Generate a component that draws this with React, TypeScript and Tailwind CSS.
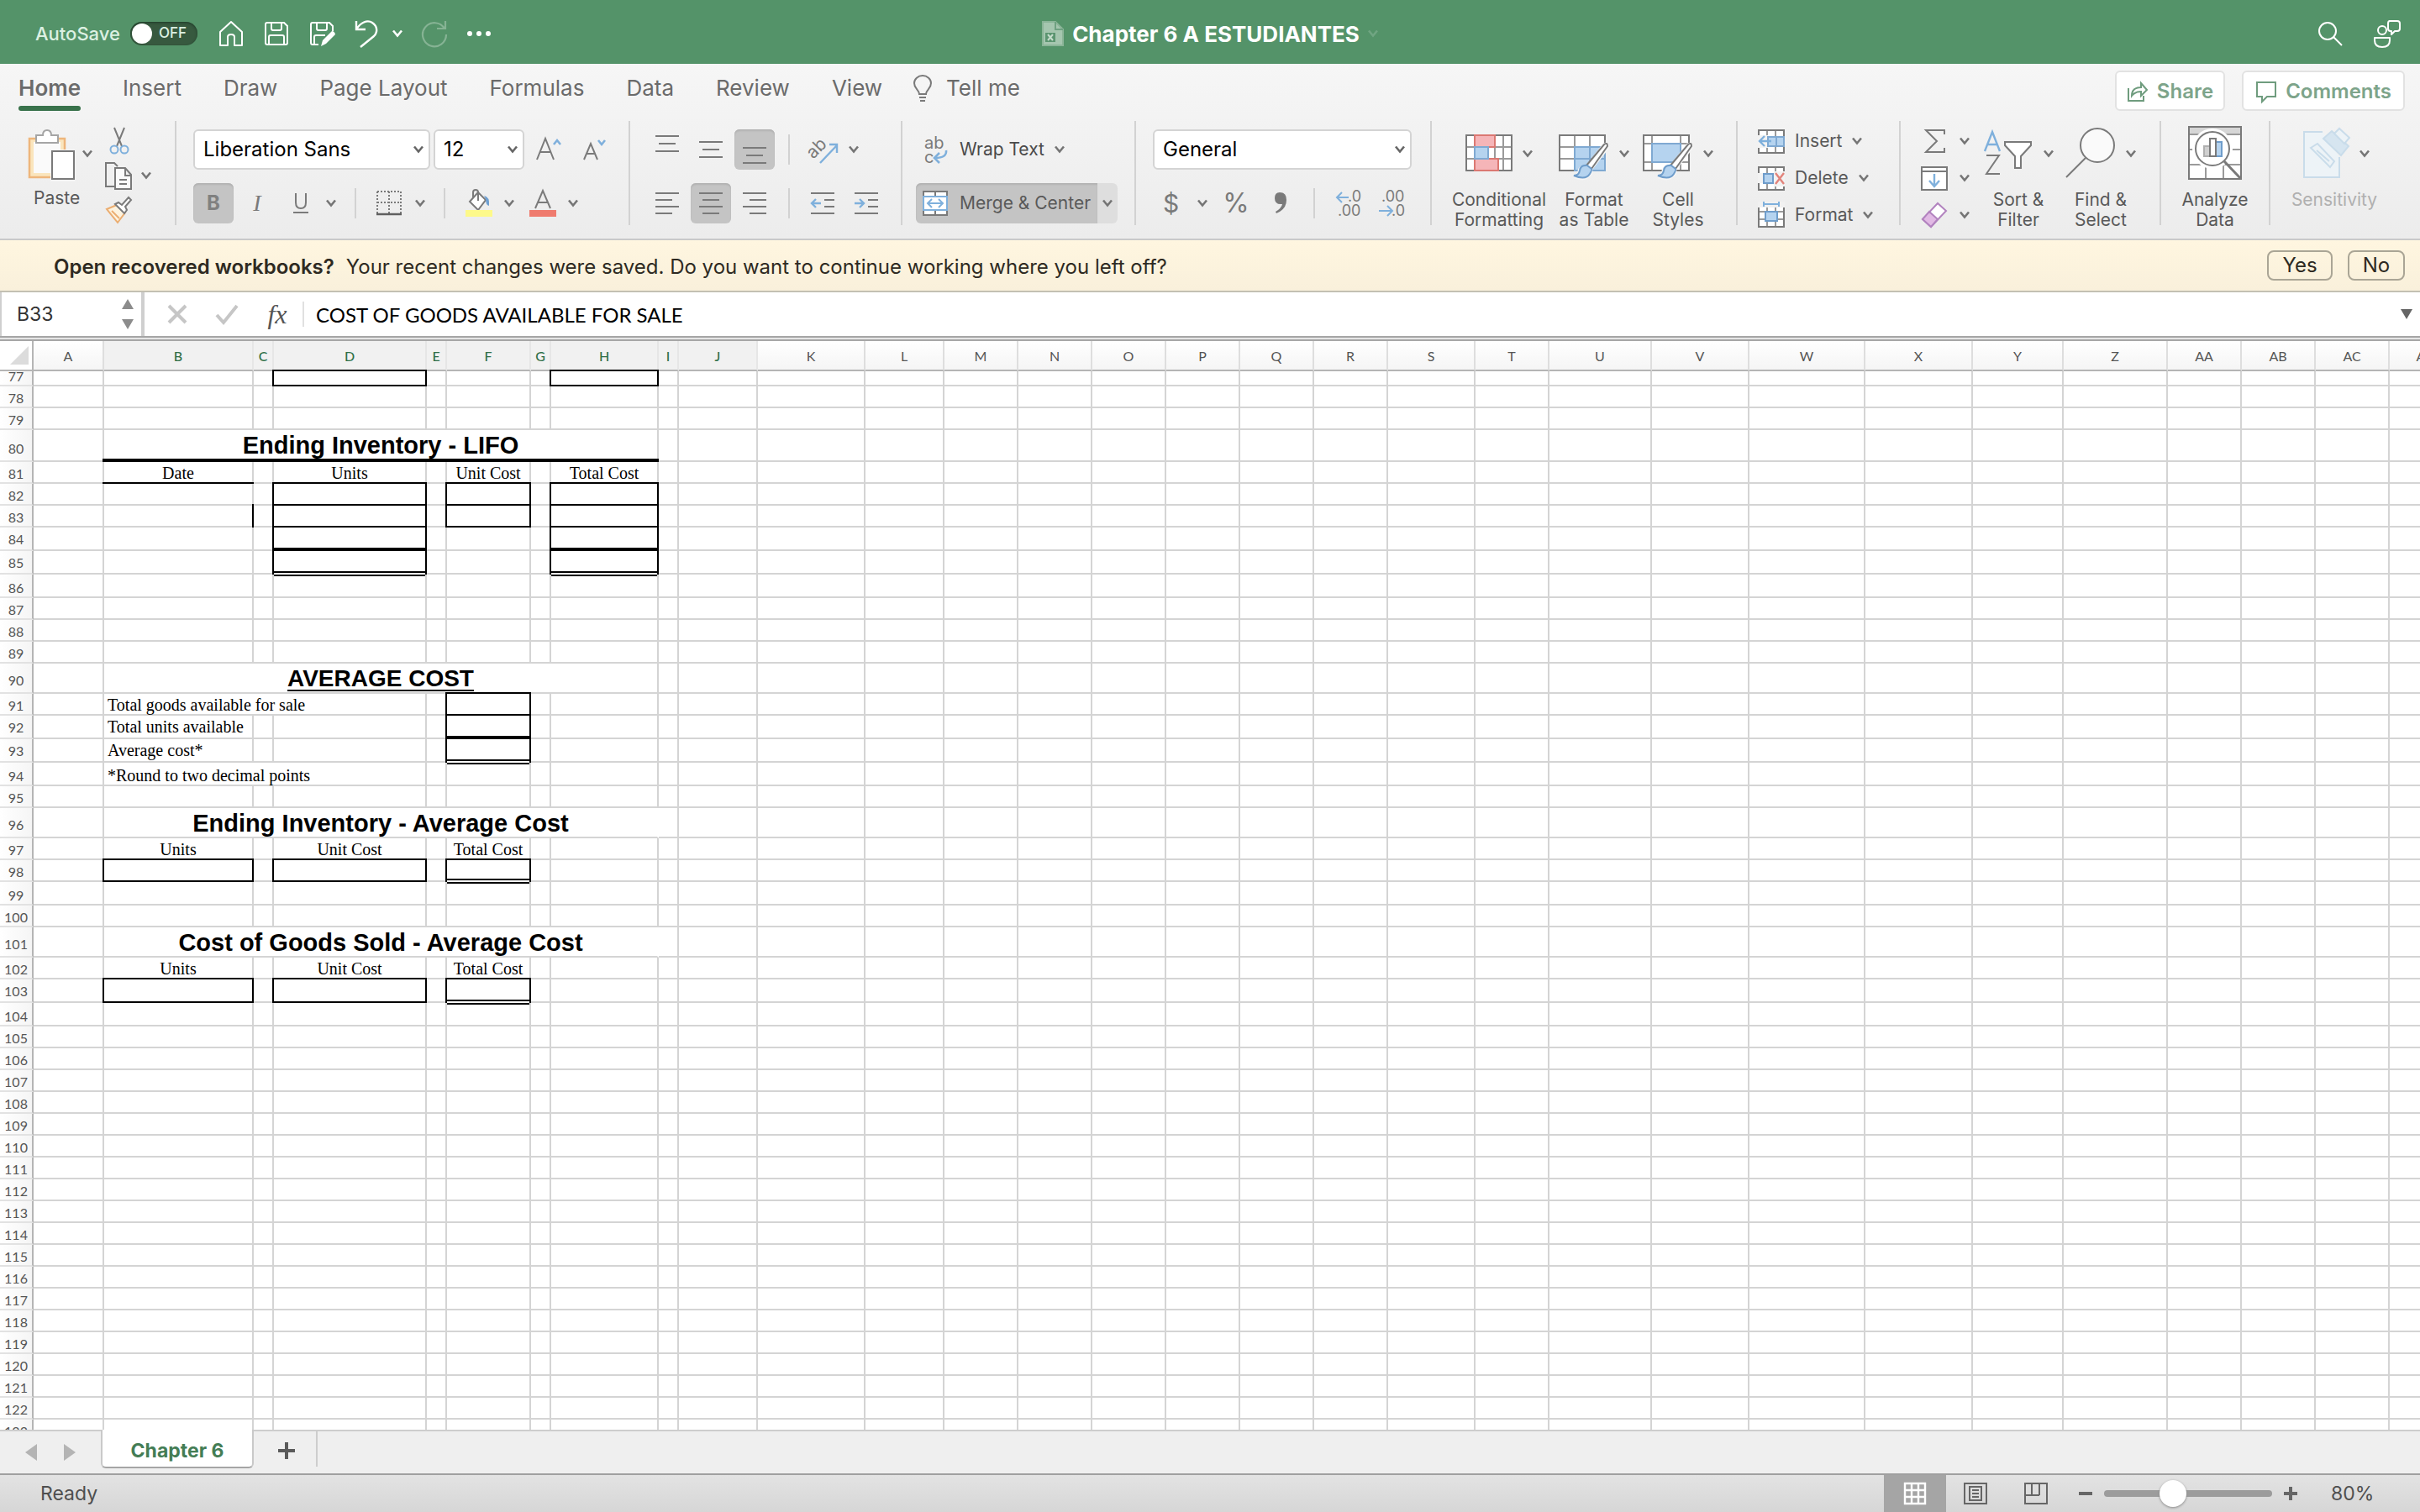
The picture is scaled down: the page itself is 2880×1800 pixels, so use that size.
import type { ReactNode } from 'react';
import clsx from 'clsx';

type Kind = 'box' | 'thick' | 'double' | 'line' | 'heavy' | 'right';
type Cell = { text?: string; span?: number; kind?: Kind; title?: boolean; center?: boolean; underline?: boolean; open?: boolean; raised?: boolean };
type Row = { h?: string; cells?: Record<string, Cell> };

const columns: [string, string][] = [
    ['A', 'w-[84px]'], ['B', 'w-[178px]'], ['C', 'w-[24px]'], ['D', 'w-[182px]'], ['E', 'w-[24px]'],
    ['F', 'w-[100px]'], ['G', 'w-[24px]'], ['H', 'w-[128px]'], ['I', 'w-[24px]'], ['J', 'w-[94px]'],
    ['K', 'w-[128px]'], ['L', 'w-[94px]'], ['M', 'w-[88px]'], ['N', 'w-[88px]'], ['O', 'w-[88px]'],
    ['P', 'w-[88px]'], ['Q', 'w-[88px]'], ['R', 'w-[88px]'], ['S', 'w-[104px]'], ['T', 'w-[88px]'],
    ['U', 'w-[122px]'], ['V', 'w-[116px]'], ['W', 'w-[138px]'], ['X', 'w-[128px]'], ['Y', 'w-[108px]'],
    ['Z', 'w-[124px]'], ['AA', 'w-[88px]'], ['AB', 'w-[88px]'], ['AC', 'w-[88px]'], ['AD', 'w-[88px]'],
];

const label = (text: string): Cell => ({ text, center: true });
const box: Cell = { kind: 'box' };
const thick: Cell = { kind: 'thick' };
const double: Cell = { kind: 'double' };

const rows: Record<number, Row> = {
    77: { h: 'h-[18px]', cells: { D: box, H: box } },
    80: { h: 'h-[38px]', cells: { B: { text: 'Ending Inventory - LIFO', span: 7, title: true, kind: 'heavy' } } },
    81: { cells: { B: { text: 'Date', center: true, kind: 'line' }, D: label('Units'), F: label('Unit Cost'), H: label('Total Cost') } },
    82: { cells: { D: box, F: box, H: box } },
    83: { cells: { B: { kind: 'right' }, D: box, F: box, H: box } },
    84: { h: 'h-[28px]', cells: { D: thick, H: thick } },
    85: { h: 'h-[28px]', cells: { D: double, H: double } },
    86: { h: 'h-[28px]' },
    90: { h: 'h-[36px]', cells: { B: { text: 'AVERAGE COST', span: 7, title: true, underline: true } } },
    91: { cells: { B: { text: 'Total goods available for sale', span: 3 }, F: box } },
    92: { h: 'h-[28px]', cells: { B: { text: 'Total units available', raised: true }, F: thick } },
    93: { h: 'h-[28px]', cells: { B: { text: 'Average cost*', raised: true }, F: double } },
    94: { h: 'h-[28px]', cells: { B: { text: '*Round to two decimal points', span: 3 } } },
    96: { h: 'h-[36px]', cells: { B: { text: 'Ending Inventory - Average Cost', span: 7, title: true, open: true } } },
    97: { cells: { B: label('Units'), D: label('Unit Cost'), F: label('Total Cost') } },
    98: { cells: { B: box, D: box, F: double } },
    99: { h: 'h-[28px]' },
    101: { h: 'h-[36px]', cells: { B: { text: 'Cost of Goods Sold - Average Cost', span: 7, title: true, open: true } } },
    102: { cells: { B: label('Units'), D: label('Unit Cost'), F: label('Total Cost') } },
    103: { h: 'h-[28px]', cells: { B: box, D: box, F: double } },
    104: { h: 'h-[28px]' },
};

const rowNumbers = Array.from({ length: 47 }, (_, i) => 77 + i);

const outline: Record<Kind, string> = {
    box: '-inset-0.5 border-2',
    thick: '-inset-0.5 border-2 border-b-4',
    double: '-inset-x-0.5 -top-0.5 -bottom-1 border-2 bg-white after:absolute after:inset-x-0 after:bottom-0.5 after:h-0.5 after:bg-black',
    line: '-inset-x-0.5 -bottom-0.5 border-b-2',
    heavy: '-inset-x-0.5 -bottom-0.5 border-b-4',
    right: '-inset-y-0.5 -right-0.5 border-r-2',
};

const G = '#7a7a7a';
const BL = '#7fb0dc';

const Chevron = ({ className = 'text-[#757575]' }: { className?: string }) => (
    <svg width="12" height="10" viewBox="0 0 12 10" className={clsx('shrink-0', className)} fill="none" stroke="currentColor" strokeWidth="2.6">
        <path d="M1 1.5l5 6 5-6" />
    </svg>
);

const Svg = ({ w = 32, h = 32, children, className }: { w?: number; h?: number; children: ReactNode; className?: string }) => (
    <svg width={w} height={h} viewBox={`0 0 ${w} ${h}`} fill="none" stroke={G} strokeWidth="2" className={clsx('shrink-0 overflow-visible', className)}>
        {children}
    </svg>
);

const Lines = ({ d }: { d: string }) => (
    <Svg w={28} h={28}><path d={d} /></Svg>
);

const Tool = ({ name, active, children, className = 'w-12' }: { name: string; active?: boolean; children: ReactNode; className?: string }) => (
    <button
        aria-label={name}
        className={clsx('flex h-12 shrink-0 items-center justify-center rounded-md', className, active && 'bg-[#c4c4c4] shadow-[inset_0_2px_2px_#b2b2b2]')}
    >
        {children}
    </button>
);

const Rule = ({ className }: { className?: string }) => <div className={clsx('h-9 w-0.5 shrink-0 bg-[#d2d2d2]', className)} />;

const Group = ({ children, className }: { children: ReactNode; className: string }) => (
    <div className={clsx('flex h-[124px] shrink-0 border-r-2 border-[#d2d2d2] pt-2.5', className)}>{children}</div>
);

const BigTool = ({ icon, lines, className, chevron = true, dim }: { icon: ReactNode; lines: string[]; className: string; chevron?: boolean; dim?: boolean }) => (
    <button className={clsx('-mt-1 flex shrink-0 flex-col items-center self-start text-[21px] leading-6', dim ? 'text-[#b0b0b0]' : 'text-[#595959]', className)}>
        <span className="flex h-16 items-center gap-3">
            {icon}
            {chevron && <span className="pt-0.5"><Chevron /></span>}
        </span>
        <span className="mt-3 block whitespace-nowrap">
            {lines.map((l) => <span key={l} className="block">{l}</span>)}
        </span>
    </button>
);

const Pick = ({ name, value, className }: { name: string; value: string; className: string }) => (
    <label className={clsx('relative flex h-12 shrink-0 items-center', className)}>
        <select aria-label={name} className="h-12 w-full appearance-none rounded-md border-2 border-[#d4d4d4] bg-white pl-2.5 text-2xl leading-8 text-black">
            <option>{value}</option>
        </select>
        <Chevron className="pointer-events-none absolute right-2 text-[#666]" />
    </label>
);

const TitleBar = () => (
    <header className="grid h-[76px] shrink-0 grid-cols-[1fr_auto_1fr] items-center bg-[#549369] pt-1 text-white">
        <div className="flex items-center pl-[42px]">
            <label className="flex items-center gap-3 text-[22px] font-medium text-[#dcf0e2]">
                AutoSave
                <input type="checkbox" className="peer sr-only" />
                <span className="flex h-7 w-20 items-center gap-2 rounded-full bg-[#37593f] pl-0.5 text-[17px] font-medium shadow-[inset_0_1px_3px_#1e3a28]">
                    <span className="h-6 w-6 rounded-full bg-white" />
                    OFF
                </span>
            </label>
            <button aria-label="Home" className="ml-6">
                <Svg w={32} h={32}><path stroke="#fff" d="M3 14L16 2l13 12v16h-9V20q0-3-4-3t-4 3v10H3z" strokeLinejoin="round" /></Svg>
            </button>
            <button aria-label="Save" className="ml-[22px]">
                <Svg w={32} h={32}><g stroke="#fff"><path d="M3 5q0-2 2-2h20l4 4v20q0 2-2 2H5q-2 0-2-2z" /><path d="M10 3v7q0 2 2 2h8q2 0 2-2V3M7 29V20q0-2 2-2h14q2 0 2 2v9" /></g></Svg>
            </button>
            <button aria-label="Save as" className="ml-[22px]">
                <Svg w={32} h={32}><g stroke="#fff"><path d="M12 29H5q-2 0-2-2V5q0-2 2-2h20l4 4v6" /><path d="M10 3v7q0 2 2 2h8q2 0 2-2V3M7 29V20q0-2 2-2h11" /></g><path d="M15 31l2-7 11-11q3 0 4 4L21 28z" fill="#fff" stroke="none" /></Svg>
            </button>
            <button aria-label="Undo" className="ml-[22px]">
                <Svg w={30} h={34}><path stroke="#fff" strokeWidth="2.4" d="M3 2v10h11M3 12C8 4 16 0 22 4s7 11 2 16L8 33" /></Svg>
            </button>
            <button aria-label="Undo history" className="ml-4"><Chevron className="text-white" /></button>
            <button aria-label="Redo" className="ml-5">
                <Svg w={34} h={34}><path stroke="#86b394" strokeWidth="2.2" d="M31 2v9H21M30 11a14 14 0 1 0 2 7" /></Svg>
            </button>
            <button aria-label="More" className="ml-5">
                <Svg w={32} h={32}><g fill="#fff" stroke="none"><circle cx="6" cy="16" r="3" /><circle cx="17" cy="16" r="3" /><circle cx="28" cy="16" r="3" /></g></Svg>
            </button>
        </div>
        <h1 className="flex items-center gap-2.5 text-[26px] font-bold">
            <Svg w={26} h={30}><path d="M1 1h15l9 9v19H1z" fill="#a5c6af" stroke="#8bb598" /><path d="M16 1v9h9" stroke="#6fa181" /><path d="M4 14h12v11H4z" fill="#5b9570" stroke="none" /><path d="M7 16l6 7M13 16l-6 7" stroke="#c5dccb" /></Svg>
            Chapter 6 A ESTUDIANTES
            <Chevron className="text-[#70a582]" />
        </h1>
        <div className="flex items-center justify-end gap-9 pr-[22px]">
            <button aria-label="Search"><Svg w={30} h={30}><g stroke="#fff"><circle cx="12" cy="12" r="10" /><path d="M19 19l10 10" /></g></Svg></button>
            <button aria-label="Account"><Svg w={34} h={34}><g stroke="#fff"><circle cx="11" cy="13" r="5" /><path d="M2 22h18v3q0 8-9 8t-9-8zM19 2h10q3 0 3 3v6q0 3-3 3h-3l-4 4v-4h-1q-3 0-3-3V5q0-3 2-3" strokeLinejoin="round" /></g></Svg></button>
        </div>
    </header>
);

const tabs = ['Home', 'Insert', 'Draw', 'Page Layout', 'Formulas', 'Data', 'Review', 'View'];

const Tabs = () => (
    <div className="flex h-[68px] items-start justify-between pr-[18px] pl-[22px]">
        <nav className="flex items-start gap-[50px] pt-3 text-[26px] leading-[34px] text-[#6b6b6b]">
            {tabs.map((t) => (
                <button key={t} className={clsx('whitespace-nowrap', t === 'Home' && 'font-semibold')}>
                    {t}
                    {t === 'Home' && <span className="mt-1 block h-1.5 rounded-sm bg-[#39724b]" />}
                </button>
            ))}
            <button className="-ml-3.5 flex h-[34px] items-center gap-4">
                <Svg w={24} h={32}><path d="M8 23c0-5-6-6-6-13a10 9 0 0 1 20 0c0 7-6 8-6 13zM8 27h8M9 31h6" /></Svg>
                Tell me
            </button>
        </nav>
        <div className="flex gap-5 pt-2 text-2xl font-semibold text-[#7da48a]">
            <button className="flex h-12 items-center gap-2.5 rounded-md border-2 border-[#e2e2e2] bg-white px-3 pt-0.5">
                <Svg w={26} h={26}><path stroke="#6f9c7e" d="M2 9v15h18v-6M6 18c0-7 4-10 11-10V3l7 8-7 7v-5c-5 0-8 1-11 5z" /></Svg>
                Share
            </button>
            <button className="flex h-12 items-center gap-2.5 rounded-md border-2 border-[#e2e2e2] bg-white px-3.5 pt-0.5">
                <Svg w={26} h={26}><path stroke="#6f9c7e" d="M2 2h22v17H14l-6 6v-6H2z" /></Svg>
                Comments
            </button>
        </div>
    </div>
);

const Brush = () => (
    <g transform="translate(12 6)">
        <path d="M42 15L21 42q-7-2-8 4-1 6-6 6 12 5 18-3 2-3 0-5l21-27q0-4-4-2z" fill="#f5f5f5" stroke="#f5f5f5" strokeWidth="5" />
        <path d="M21 39L42 14q4-3 4 2L27 43z" fill="#fff" />
        <path d="M22 39q-8-1-9 6-1 6-7 6 14 6 19-2 3-5 2-6z" fill="#b5d3ef" stroke="#6f9dcb" />
    </g>
);

const Ribbon = () => (
    <div className="flex text-[21px] text-[#595959]">
        <Group className="w-[210px] pl-[30px]">
            <div className="flex flex-col">
                <button className="flex h-[60px] items-start gap-2">
                    <Svg w={60} h={62}>
                        <path d="M5 11h42v46H5z" fill="#fae5bd" stroke="#eeb67c" strokeWidth="2.5" />
                        <path d="M10 15h32v37H10z" fill="#fafafa" stroke="none" />
                        <path d="M13 7h8q0-6 5-6t5 6h8v9H13z" fill="#fff" stroke="#a5a5a5" />
                        <path d="M30 24h30v38H30z" fill="#f3f3f3" stroke="none" />
                        <path d="M32 26h26v33H32z" fill="#fff" />
                    </Svg>
                    <span className="pt-6"><Chevron /></span>
                </button>
                <span className="mt-2.5 pl-2.5 leading-6">Paste</span>
            </div>
            <div className="-mt-1 ml-3.5 flex flex-col gap-2">
                <button aria-label="Cut" className="pl-1">
                    <Svg w={28} h={34}><path d="M8 2l9 22M20 2l-9 22" /><g stroke={BL}><circle cx="8" cy="28" r="4.5" /><circle cx="20" cy="28" r="4.5" /></g></Svg>
                </button>
                <button aria-label="Copy" className="flex items-center gap-2.5">
                    <Svg w={34} h={34}><path d="M13 30H2V2h10l4 4" /><path d="M13 8h12l7 8v17H13zM25 8v9h7M18 22h9M18 27h9" fill="#fafafa" /></Svg>
                    <Chevron />
                </button>
                <button aria-label="Format painter">
                    <Svg w={34} h={32}><path d="M3 15l12-5 10 9-9 12z" fill="#fdf3df" stroke="#ebae72" /><path d="M9 17l9 9" stroke="#ebae72" /><path d="M13 9l4-2 4 3 8-9 3 3-7 8 2 4-3 4z" fill="#fff" /></Svg>
                </button>
            </div>
        </Group>

        <Group className="w-[540px] flex-col gap-4 pl-5">
            <div className="flex items-center">
                <Pick name="Font" value="Liberation Sans" className="w-[282px]" />
                <Pick name="Font size" value="12" className="ml-1 w-[108px]" />
                <button aria-label="Increase font size" className="ml-3.5"><Svg w={34} h={36}><path d="M1 30L11 5l10 25M5 21h12" /><path stroke={BL} strokeWidth="2.6" d="M21 12l4-5 4 5" /></Svg></button>
                <button aria-label="Decrease font size" className="ml-[22px]"><Svg w={30} h={36}><path d="M1 30L9 11l8 19M4 23h10" /><path stroke={BL} strokeWidth="2.6" d="M18 7l4 5 4-5" /></Svg></button>
            </div>
            <div className="flex items-center">
                <Tool name="Bold" active><span className="text-2xl font-bold text-[#808080]">B</span></Tool>
                <Tool name="Italic" className="w-14"><span className="font-['Liberation_Serif'] text-[28px] text-[#7a7a7a] italic">I</span></Tool>
                <Tool name="Underline" className="w-12"><Svg w={20} h={28}><path d="M4 2v11q0 7 6 7t6-7V2M1 25h18" /></Svg></Tool>
                <Chevron className="ml-1.5 text-[#757575]" />
                <Rule className="ml-[22px]" />
                <button aria-label="Borders" className="ml-6 flex items-center gap-4">
                    <Svg w={30} h={32}><path d="M1 2h28v26M1 2v26M15 2v26M1 15h28" strokeDasharray="2 2" /><path d="M0 29h30" stroke="#606060" strokeWidth="2.5" /></Svg>
                    <Chevron />
                </button>
                <Rule className="ml-[22px]" />
                <button aria-label="Fill color" className="ml-6 flex items-center gap-3.5">
                    <Svg w={32} h={34}><path d="M5 15L15 4l9 9-9 12z" fill="#fff" /><path d="M15 14V4q0-3-3-3t-3 3v6" /><path d="M22 8q7 1 6 12-4-1-4-8z" fill="#6d9fd2" stroke="none" /><path d="M0 25h32v8H0z" fill="#fdf98a" stroke="none" /></Svg>
                    <Chevron />
                </button>
                <button aria-label="Font color" className="ml-[18px] flex items-center gap-3.5">
                    <Svg w={32} h={34}><path d="M7 23L16 2l9 21M10 16h12" /><path d="M0 25h32v8H0z" fill="#ef7b6e" stroke="none" /></Svg>
                    <Chevron />
                </button>
            </div>
        </Group>

        <Group className="w-[324px] flex-col gap-4 pl-5">
            <div className="flex items-center gap-1">
                <Tool name="Align top"><span className="pb-3.5"><Lines d="M0 5h28M4 14h20M0 23h28" /></span></Tool>
                <Tool name="Align middle"><Lines d="M0 5h28M4 14h20M0 23h28" /></Tool>
                <Tool name="Align bottom" active><span className="pt-3.5"><Lines d="M0 5h28M4 14h20M0 23h28" /></span></Tool>
                <Rule className="ml-3" />
                <button aria-label="Orientation" className="ml-5 flex items-center gap-3">
                    <Svg w={34} h={34}>
                        <text x="0" y="24" fontSize="21" fill={G} stroke="none" transform="rotate(-45 8 22)">ab</text>
                        <path d="M12 33L32 12M23 11h9v10" stroke={BL} strokeWidth="2.4" />
                    </Svg>
                    <Chevron />
                </button>
            </div>
            <div className="flex items-center gap-1">
                <Tool name="Align left"><Lines d="M0 2h28M0 10h20M0 18h28M0 26h20" /></Tool>
                <Tool name="Center" active><Lines d="M0 2h28M4 10h20M0 18h28M4 26h20" /></Tool>
                <Tool name="Align right"><Lines d="M0 2h28M8 10h20M0 18h28M8 26h20" /></Tool>
                <Rule className="ml-3" />
                <button aria-label="Decrease indent" className="ml-5">
                    <Svg w={30} h={28}><path d="M1 2h28M17 10h12M17 18h12M1 26h28" /><path d="M13 14H2M7 9l-5 5 5 5" stroke={BL} strokeWidth="2.4" /></Svg>
                </button>
                <button aria-label="Increase indent" className="ml-[18px]">
                    <Svg w={30} h={28}><path d="M1 2h28M17 10h12M17 18h12M1 26h28" /><path d="M1 14h11M7 9l5 5-5 5" stroke={BL} strokeWidth="2.4" /></Svg>
                </button>
            </div>
        </Group>

        <Group className="w-[278px] flex-col gap-4 pl-4">
            <button className="flex h-12 items-center gap-3 pl-2.5 whitespace-nowrap text-[#4a4a4a]">
                <Svg w={30} h={34}>
                    <g fill={G} stroke="none" fontSize="20"><text x="0" y="16">ab</text><text x="0" y="33">c</text></g>
                    <path d="M26 18q1 9-13 9M18 21l-6 6 6 6" stroke={BL} strokeWidth="2.6" />
                </Svg>
                Wrap Text
                <Chevron />
            </button>
            <div className="flex">
                <button className="flex h-12 w-[216px] items-center gap-3.5 rounded-l-md bg-[#c4c4c4] pl-2 whitespace-nowrap shadow-[inset_0_2px_2px_#b2b2b2]">
                    <Svg w={30} h={32}>
                        <path d="M1 2h28v28H1z" fill="#fff" /><path d="M15 2v28" /><path d="M1 8h28v16H1z" fill="#fff" stroke={BL} />
                        <path d="M6 16h18M11 11l-5 5 5 5M19 11l5 5-5 5" stroke={BL} />
                    </Svg>
                    Merge &amp; Center
                </button>
                <button aria-label="Merge options" className="flex h-12 w-6 items-center justify-center rounded-r-md bg-[#dedede]"><Chevron /></button>
            </div>
        </Group>

        <Group className="w-[352px] flex-col gap-4 pl-5">
            <Pick name="Number format" value="General" className="w-[308px]" />
            <div className="flex h-12 items-center text-[#7a7a7a]">
                <button className="ml-3 flex items-center gap-[22px] text-[30px]">$<Chevron /></button>
                <button className="ml-[18px] text-[32px]">%</button>
                <button aria-label="Comma style" className="ml-7"><Svg w={18} h={30}><path d="M8 2q8 0 8 9 0 11-12 16l-1-2q7-4 8-9-9 1-9-7 0-7 6-7z" fill={G} stroke="none" /></Svg></button>
                <Rule className="ml-[30px]" />
                <button aria-label="Increase decimal" className="ml-[22px]">
                    <Svg w={32} h={34}><g fill={G} stroke="none" fontSize="18"><text x="17" y="15">.0</text><text x="5" y="32">.00</text></g><path d="M18 10H4M10 4l-6 6 6 6" stroke={BL} /></Svg>
                </button>
                <button aria-label="Decrease decimal" className="ml-5">
                    <Svg w={32} h={34}><g fill={G} stroke="none" fontSize="18"><text x="5" y="15">.00</text><text x="17" y="32">.0</text></g><path d="M2 26h16M12 20l6 6-6 6" stroke={BL} /></Svg>
                </button>
            </div>
        </Group>

        <Group className="w-[364px] pl-6">
            <BigTool className="w-28" lines={['Conditional', 'Formatting']} icon={
                <Svg w={56} h={46}>
                    <path d="M1 2h54v42H1z" fill="#fff" /><path d="M1 16h54M1 30h54M11 2v42M45 2v42M35 16v14" stroke="#9a9a9a" />
                    <path d="M1 2h54v42H1z" />
                    <path d="M11 2h24v14H11zM11 30h28v14H11z" fill="#f5b5b8" stroke="#db7872" /><path d="M11 16h16v14H11z" fill="#b5d3ef" stroke="#7fa9d2" />
                </Svg>
            } />
            <BigTool className="ml-3 w-[90px]" lines={['Format', 'as Table']} icon={
                <Svg w={60} h={60}>
                    <path d="M1 9h54v42H1z" fill="#fff" /><path d="M19 23h36v28H19z" fill="#b5d3ef" /><path d="M1 23h54M1 37h54M19 9v42M37 9v14" stroke="#9a9a9a" />
                    <path d="M1 9h54v42H1z" /><path d="M19 23h36v28H19zM19 37h36M37 23v28" stroke="#7fa9d2" /><Brush />
                </Svg>
            } />
            <BigTool className="ml-2.5 w-[90px]" lines={['Cell', 'Styles']} icon={
                <Svg w={60} h={60}>
                    <path d="M1 9h54v42H1z" fill="#fff" /><path d="M1 19h54M1 41h54M11 9v42M45 9v42" stroke="#9a9a9a" />
                    <path d="M1 9h54v42H1z" /><path d="M11 19h34v22H11z" fill="#b5d3ef" stroke="#7fa9d2" /><Brush />
                </Svg>
            } />
        </Group>

        <Group className="w-[194px] pl-6">
            <div className="-mt-2 flex flex-col">
                {['Insert', 'Delete', 'Format'].map((t) => (
                    <button key={t} className="flex h-11 shrink-0 items-center gap-3">
                        <Svg w={32} h={32}>
                            <path d="M1 3h30v27H1z" fill="#fff" /><path d="M1 12h30M1 21h30M11 3v27M21 3v27" stroke="#9a9a9a" /><path d="M1 3h30v27H1z" />
                            {t === 'Insert' && <><path d="M0 9h12v15H0z" fill="#f3f3f3" stroke="none" /><path d="M12 11h19v11H12z" fill="#b5d3ef" stroke="#7fa9d2" /><path d="M22 11v11" stroke="#7fa9d2" /><path d="M16 16H2M8 10l-6 6 6 6" stroke={BL} strokeWidth="2.4" /></>}
                            {t === 'Delete' && <><path d="M0 10h8v12H0zM19 8h13v18H19z" fill="#f3f3f3" stroke="none" /><path d="M7 11h11v11H7z" fill="#b5d3ef" stroke="#6f9dcb" /><path d="M21 10l10 13M31 10L21 23" stroke="#e2847c" strokeWidth="2.4" /></>}
                            {t === 'Format' && <><path d="M0 0h32v7H0z" fill="#f1f1f1" stroke="none" /><path d="M7 0v6M25 0v6M7 3h18" stroke={BL} /><path d="M9 12h14v11H9z" fill="#b5d3ef" stroke="#6f9dcb" /></>}
                        </Svg>
                        {t}
                        <Chevron />
                    </button>
                ))}
            </div>
        </Group>

        <Group className="w-[310px] pl-6">
            <div className="-mt-2 flex flex-col">
                <button aria-label="AutoSum" className="flex h-11 shrink-0 items-center gap-3.5"><Svg><path d="M28 8V3H6l13 13L6 29h22v-5" /></Svg><Chevron /></button>
                <button aria-label="Fill" className="flex h-11 shrink-0 items-center gap-3.5"><Svg><path d="M1 3h30v27H1z" fill="#fff" /><path d="M1 8h30" /><path d="M16 11v14M10 19l6 7 6-7" stroke={BL} strokeWidth="2.4" /></Svg><Chevron /></button>
                <button aria-label="Clear" className="flex h-11 shrink-0 items-center gap-3.5"><Svg><path d="M2 21L20 2l10 9-18 19z" fill="#fff" stroke="#b283bf" /><path d="M2 21l8-9 10 9-8 9z" fill="#e1b9e4" stroke="#b283bf" /></Svg><Chevron /></button>
            </div>
            <BigTool className="ml-4 w-[84px]" lines={['Sort &', 'Filter']} icon={
                <Svg w={60} h={56}><path d="M2 26L11 3l9 23M5 18h12" stroke={BL} strokeWidth="2.4" /><path d="M4 31h15L4 53h16" /><path d="M26 15h31v4L45 32v14h-7V32L26 19z" fill="#fff" /></Svg>
            } />
            <BigTool className="ml-3.5 w-[84px]" lines={['Find &', 'Select']} icon={
                <Svg w={60} h={60}><circle cx="38" cy="21" r="20" fill="#fafafa" /><path d="M24 36L1 59" /></Svg>
            } />
        </Group>

        <Group className="w-[130px] justify-center">
            <BigTool className="w-[84px]" chevron={false} lines={['Analyze', 'Data']} icon={
                <Svg w={64} h={64}>
                    <path d="M1 1h62v62H1z" fill="#fff" /><path d="M1 1h62v9H1z" fill="#d6d6d6" stroke="none" /><path d="M1 10h62M1 28h62M1 46h62M21 46v17M42 46v17" stroke="#9a9a9a" />
                    <path d="M1 1h62v62H1z" /><circle cx="29" cy="27" r="23" fill="#fff" stroke="#fff" /><circle cx="29" cy="27" r="20" fill="#fff" /><path d="M43 42l19 20" strokeWidth="3" />
                    <path d="M19 24h7v12h-7z" fill="#d0d0d0" stroke="#b0b0b0" /><path d="M33 19h7v17h-7z" fill="#b5d3ef" stroke="#6f9dcb" /><path d="M26 15h7v21h-7z" fill="#fff" />
                </Svg>
            } />
        </Group>

        <div className="flex h-[124px] shrink-0 pt-2.5 pl-6">
            <BigTool dim className="w-[104px]" lines={['Sensitivity']} icon={
                <Svg w={60} h={62}><g stroke="#c9dcea" fill="#edf3f7">
                    <path d="M28 6H6v54h42V36" /><path d="M14 25l8-5 20 21-5 7z" /><path d="M21 28l15 13" /><path d="M29 14l10-9 20 18-9 11z" fill="#d6e5f0" /><path d="M42 8l6-6 12 11-6 7z" />
                </g></Svg>
            } />
        </div>
    </div>
);

const RecoveryBar = () => (
    <div className="flex h-[62px] shrink-0 items-center border-b-2 border-[#c3c0b2] bg-gradient-to-b from-[#fff6e0] to-[#f9f0db] pr-[18px] pl-16 text-2xl text-[#2e2a22]">
        <strong className="pt-1 font-semibold">Open recovered workbooks?</strong>
        <p className="ml-3.5 flex-1 pt-1">Your recent changes were saved. Do you want to continue working where you left off?</p>
        <button className="h-9 w-[78px] rounded-lg border-2 border-[#aaa595] leading-8">Yes</button>
        <button className="ml-[18px] h-9 w-[68px] rounded-lg border-2 border-[#aaa595] leading-8">No</button>
    </div>
);

const FormulaBar = () => (
    <div className="flex h-[52px] shrink-0 items-center bg-white">
        <div className="flex h-full w-[172px] items-center border-r-4 border-l-2 border-[#cfcfcf] pr-2">
            <input aria-label="Name box" defaultValue="B33" className="w-0 flex-1 pl-[18px] text-[23px] text-[#333]" />
            <Svg w={16} h={36}><g fill="#8c8c8c" stroke="none"><path d="M8 0l7 12H1zM1 24h14L8 36z" /></g></Svg>
        </div>
        <button aria-label="Cancel" className="ml-[26px]"><Svg w={26} h={26}><path d="M3 3l20 20M23 3L3 23" stroke="#c6c6c6" strokeWidth="4" /></Svg></button>
        <button aria-label="Enter" className="ml-8"><Svg w={28} h={26}><path d="M2 14l8 9L26 3" stroke="#c6c6c6" strokeWidth="4" /></Svg></button>
        <button aria-label="Insert function" className="ml-[30px] w-8 font-['Liberation_Serif'] text-[32px] leading-8 text-[#555] italic">fx</button>
        <div className="ml-3.5 h-[30px] w-0.5 bg-[#e0e0e0]" />
        <input aria-label="Formula" defaultValue="COST OF GOODS AVAILABLE FOR SALE" className="ml-3.5 flex-1 pt-0.5 font-['Lato',sans-serif] text-2xl text-black" />
        <button aria-label="Expand formula bar" className="pr-2"><Svg w={16} h={14}><path d="M1 1h14L8 13z" fill="#666" stroke="none" /></Svg></button>
    </div>
);

const SheetRow = ({ n }: { n: number }) => {
    const row = rows[n] ?? {};
    const cells: ReactNode[] = [];
    for (let i = 0; i < columns.length; i++) {
        const name = columns[i][0];
        const c = row.cells?.[name];
        cells.push(
            <td
                key={name}
                colSpan={c?.span}
                className={clsx(
                    'relative border-r-2 border-b-2 border-[#d4d4d4] p-0 align-bottom whitespace-nowrap',
                    c?.open && 'border-r-white',
                    c?.title ? "text-center font-['Liberation_Sans'] leading-8 font-bold" : "font-['Liberation_Serif'] text-xl leading-[22px]",
                    c?.title && (c.underline ? 'text-[28px] underline decoration-2 underline-offset-4' : 'text-[29px]'),
                    c?.center && 'text-center',
                    c?.text && !c.title && !c.center && 'pl-1',
                    (c?.kind === 'heavy' || c?.raised) && 'pb-0.5',
                )}
            >
                {c?.text}
                {c?.kind && <span className={clsx('absolute border-black', outline[c.kind])} />}
            </td>,
        );
        if (c?.span) i += c.span - 1;
    }
    const tall = row.h === 'h-[36px]' || row.h === 'h-[38px]';
    // rows that grew for a thick or double border keep their number a bit higher
    const bordered = row.h === 'h-[28px]' && Object.values(row.cells ?? {}).some((c) => c.kind);
    return (
        <tr className={row.h ?? 'h-[26px]'}>
            <th
                scope="row"
                className={clsx(
                    "border-r-2 border-b-2 border-r-[#b5b5b5] border-b-[#e2e2e2] bg-gradient-to-r from-white to-[#f5f5f5] p-0 align-bottom font-['Lato',sans-serif] text-base leading-5 font-normal text-[#555]",
                    tall && 'pb-1',
                    bordered && 'pb-0.5',
                )}
            >
                <div className={clsx('flex items-end justify-center overflow-hidden', n === 77 ? 'h-4' : 'h-5')}>{n}</div>
            </th>
            {cells}
        </tr>
    );
};

const Sheet = () => (
    <main className="min-h-0 flex-1 overflow-hidden bg-white text-black">
        <table className="w-[calc(100%+52px)] table-fixed border-separate border-spacing-0">
            <colgroup>
                <col className="w-[40px]" />
                {columns.map(([name, w]) => <col key={name} className={name === 'AD' ? undefined : w} />)}
            </colgroup>
            <thead>
                <tr className="h-9">
                    <th aria-label="Select all" className="border-r-2 border-b-2 border-[#b5b5b5] p-0">
                        <Svg w={22} h={22} className="ml-3"><path d="M22 0v22H0z" fill="#dcdcdc" stroke="none" /></Svg>
                    </th>
                    {columns.map(([name], i) => (
                        <th
                            key={name}
                            scope="col"
                            className={clsx(
                                "border-r-2 border-b-2 border-b-[#b5b5b5] p-0 pt-0.5 font-['Lato',sans-serif] text-base leading-5",
                                i > 0 && i < 10 ? 'border-r-[#e6e6e6] bg-[#f1f1f1] font-medium text-[#2f6f47]' : 'border-r-[#dedede] bg-gradient-to-b from-white to-[#f5f5f5] font-normal text-[#555]',
                            )}
                        >
                            {name}
                        </th>
                    ))}
                </tr>
            </thead>
            <tbody>{rowNumbers.map((n) => <SheetRow key={n} n={n} />)}</tbody>
        </table>
    </main>
);

const SheetTabs = () => (
    <div className="flex h-[52px] shrink-0 items-start border-t-2 border-[#cdcdcd] bg-[#efefef]">
        <button aria-label="Previous sheet" className="mt-[15px] ml-[30px]"><Svg w={14} h={20}><path d="M14 0v20L0 10z" fill="#b4b4b4" stroke="none" /></Svg></button>
        <button aria-label="Next sheet" className="mt-[15px] ml-8"><Svg w={14} h={20}><path d="M0 0v20l14-10z" fill="#b4b4b4" stroke="none" /></Svg></button>
        <button className="-mt-0.5 ml-[30px] h-[46px] w-[182px] rounded-b-md border-2 border-t-0 border-[#c9c9c9] border-b-[#a5a5a5] bg-white pt-1.5 text-[23px] font-bold text-[#447d55]">Chapter 6</button>
        <button aria-label="Add sheet" className="mt-3 ml-7"><Svg w={22} h={22}><path d="M11 1v20M1 11h20" stroke="#5a5a5a" strokeWidth="4" /></Svg></button>
        <div className="ml-6 h-[42px] w-0.5 bg-[#cdcdcd]" />
    </div>
);

const StatusBar = () => (
    <footer className="flex h-[46px] shrink-0 items-center border-t-2 border-[#a0a0a0] bg-gradient-to-b from-[#e3e3e3] to-[#d6d6d6] text-[23px] text-[#4f4f4f]">
        <span className="flex-1 pl-12">Ready</span>
        <button aria-label="Normal view" className="flex h-full w-[74px] items-center justify-center bg-[#a5a5a5]">
            <Svg w={28} h={28}><path d="M2 2h24v24H2zM10 2v24M18 2v24M2 10h24M2 18h24" stroke="#fff" strokeWidth="2.4" /></Svg>
        </button>
        <button aria-label="Page layout view" className="ml-5"><Svg w={30} h={28}><path d="M2 2h26v24H2zM8 6h14v16H8zM11 10h8M11 14h8M11 18h8" stroke="#666" /></Svg></button>
        <button aria-label="Page break view" className="ml-[42px]"><Svg w={30} h={28}><path d="M2 2h26v24H2zM10 2v14M19 2v14M2 16h17" stroke="#666" /></Svg></button>
        <button aria-label="Zoom out" className="ml-9"><Svg w={16} h={16}><path d="M0 8h16" stroke="#666" strokeWidth="4" /></Svg></button>
        <input
            type="range"
            aria-label="Zoom"
            min={0}
            max={100}
            defaultValue={39}
            className="ml-3.5 h-2 w-[200px] appearance-none rounded-full bg-[#9c9c9c] [&::-webkit-slider-thumb]:h-8 [&::-webkit-slider-thumb]:w-8 [&::-webkit-slider-thumb]:appearance-none [&::-webkit-slider-thumb]:rounded-full [&::-webkit-slider-thumb]:bg-white [&::-webkit-slider-thumb]:shadow-[0_1px_3px_#888]"
        />
        <button aria-label="Zoom in" className="ml-3.5"><Svg w={16} h={16}><path d="M0 8h16M8 0v16" stroke="#666" strokeWidth="4" /></Svg></button>
        <span className="ml-10 w-[106px]">80%</span>
    </footer>
);

export default function App() {
    return (
        <div className="flex h-screen flex-col overflow-hidden bg-white font-['Inter',sans-serif]">
            <TitleBar />
            <div className="h-[210px] shrink-0 border-b-2 border-[#c9c9c9] bg-gradient-to-b from-[#f6f6f6] to-[#ececec]">
                <Tabs />
                <Ribbon />
            </div>
            <RecoveryBar />
            <FormulaBar />
            <div className="h-1.5 shrink-0 border-t-2 border-b-2 border-[#a6a6a6] bg-[#e6e6e6]" />
            <Sheet />
            <SheetTabs />
            <StatusBar />
        </div>
    );
}
